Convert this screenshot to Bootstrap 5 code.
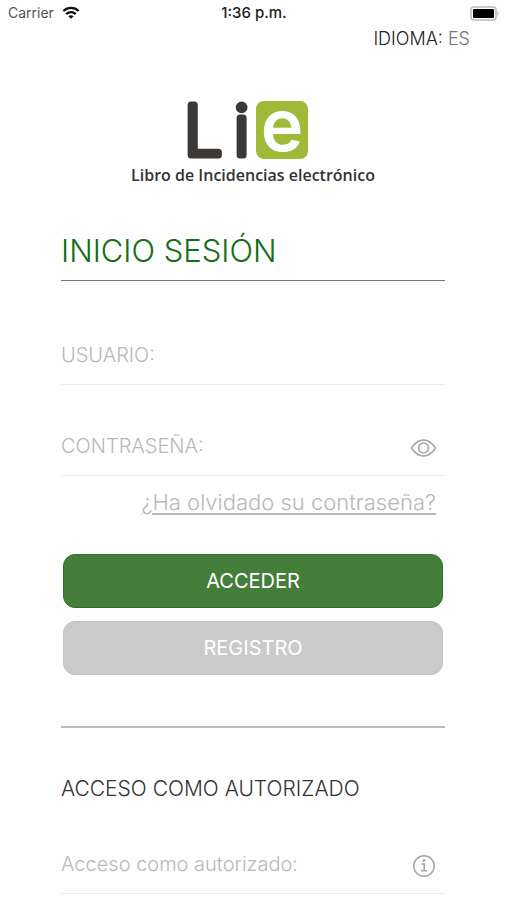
<!DOCTYPE html>
<html lang="es">
<head>
<meta charset="utf-8">
<meta name="viewport" content="width=device-width, initial-scale=1">
<title>Libro de Incidencias electrónico</title>
<link href="https://cdn.jsdelivr.net/npm/bootstrap@5.3.0/dist/css/bootstrap.min.css" rel="stylesheet">
<style>
body{font-family:Inter,"Open Sans",sans-serif;background:#fefefe;color:#333}
.status-bar{font:14px/26px Inter,sans-serif;color:#555;padding:0 6px 0 8px}
.status-time{font-size:15px;color:#222;font-weight:500}
.lang-row{font-size:18px;line-height:26px;font-weight:300;padding-right:36px}
.lang-row a{color:#777}
.lang-row span{color:#222}
.brand-block{padding-top:48px}
.brand-logo{overflow:visible}
.tagline{font:600 16px/22px "Open Sans",sans-serif;color:#333;margin-top:4px}
.screen{padding:0 61px}
.title{font-size:31px;line-height:40px;font-weight:300;color:#127012;margin:45px 0 0;padding-bottom:9px;border-bottom:1px solid #777}
.field{height:60px;border-bottom:1px solid #ebebeb;padding-right:8px}
.field .form-control{font-size:20px;line-height:30px;font-weight:300;color:#777}
.field .form-control::placeholder{color:#b8b8b8;opacity:1}
.field-user{margin-top:44px}
.field-pass{margin-top:31px}
.icon-btn{line-height:0;margin-top:5px}
.forgot{font-size:22px;line-height:30px;padding:11px 9px 0 0}
.forgot a{color:#b8b8b8;font-weight:300;text-underline-offset:3px}
.actions{gap:13px;margin:37px 2px 0}
.actions .btn{font-size:20px;line-height:30px;padding:11px;border-radius:12px;border-width:1px;color:#fff}
.btn-enter{background:#457d3b;border-color:#26751f}
.btn-register{background:#cacaca;border-color:#c2c2c2}
.divider{margin:51px 0 0;border-top:2px solid #bbb;opacity:1}
.subtitle{font-size:21px;line-height:28px;font-weight:300;color:#333;margin:47px 0 0}
.field-auth{margin-top:31px}
</style>
</head>
<body>
<header>
  <div class="status-bar row g-0 align-items-center">
    <div class="col d-flex align-items-center gap-2">
      <span>Carrier</span>
      <svg width="18" height="14" viewBox="0 0 20 15" fill="none" stroke="#111" stroke-width="2.5" aria-hidden="true"><path d="M1.5 5.2C6.3.5 13.7.5 18.5 5.2M4.7 8.7C7.7 5.8 12.3 5.8 15.3 8.7"/><path d="M7 11.1C8.7 9.5 11.3 9.5 13 11.1L10 14Z" fill="#111" stroke="none"/></svg>
    </div>
    <div class="col-auto status-time">1:36 p.m.</div>
    <div class="col d-flex justify-content-end">
      <svg width="30" height="15" viewBox="0 0 30 15" aria-hidden="true"><rect x="1" y="1" width="25" height="13" rx="3" fill="#fff" stroke="#bbb" stroke-width="1.5"/><rect x="3" y="3" width="21" height="9" rx="1" fill="#000"/><path d="M27.5 5v5q2-2.5 0-5" fill="#aaa"/></svg>
    </div>
  </div>
  <div class="lang-row text-end"><span>IDIOMA:</span> <a href="#" class="text-decoration-none">ES</a></div>
</header>
<main class="screen">
  <div class="brand-block text-center">
    <svg class="brand-logo d-block mx-auto" width="136" height="60" viewBox="0 0 136 60" role="img" aria-label="Lie" font-family="Inter, sans-serif">
      <g fill="#3c3835" stroke="#3c3835" stroke-width="7" stroke-linejoin="round" font-weight="200" font-size="68">
        <text x="-1" y="55">L</text><text x="49" y="55">i</text>
      </g>
      <rect x="71" y="1" width="52" height="58" rx="8" fill="#a0b938"/>
      <text x="97" y="51" text-anchor="middle" font-size="72" font-weight="600" fill="#fff">e</text>
    </svg>
    <div class="tagline">Libro de Incidencias electrónico</div>
  </div>
  <h1 class="title">INICIO SESIÓN</h1>
  <form>
    <div class="field field-user d-flex align-items-center">
      <input class="form-control border-0 bg-transparent p-0 shadow-none" type="text" placeholder="USUARIO:" aria-label="Usuario">
    </div>
    <div class="field field-pass d-flex align-items-center">
      <input class="form-control border-0 bg-transparent p-0 shadow-none" type="password" placeholder="CONTRASEÑA:" aria-label="Contraseña">
      <button type="button" class="btn icon-btn p-0 border-0" aria-label="Mostrar contraseña">
        <svg width="27" height="20" viewBox="0 0 27 20" fill="none" stroke="#a5a5a5" stroke-width="1.6"><path d="M1.5 10C3.5 7 7.5 2 13.5 2S23.5 7 25.5 10C23.5 13 19.5 18 13.5 18S3.5 13 1.5 10Z"/><circle cx="13.5" cy="10" r="5"/></svg>
      </button>
    </div>
    <div class="forgot text-end"><a href="#">¿Ha olvidado su contraseña?</a></div>
    <div class="actions d-grid">
      <button type="submit" class="btn btn-enter">ACCEDER</button>
      <button type="button" class="btn btn-register">REGISTRO</button>
    </div>
    <hr class="divider">
    <h2 class="subtitle">ACCESO COMO AUTORIZADO</h2>
    <div class="field field-auth d-flex align-items-center">
      <input class="form-control border-0 bg-transparent p-0 shadow-none" type="text" placeholder="Acceso como autorizado:" aria-label="Acceso como autorizado">
      <button type="button" class="btn icon-btn p-0 border-0" aria-label="Información">
        <svg width="26" height="24" viewBox="0 0 26 24" fill="none" stroke="#a5a5a5" stroke-width="1.5"><circle cx="13" cy="12" r="10.2"/><path d="M10.5 10h2.7v6M10 16.7h6"/><circle cx="13" cy="6.5" r="1" fill="#a5a5a5" stroke-width="1"/></svg>
      </button>
    </div>
  </form>
</main>
<script src="https://cdn.jsdelivr.net/npm/bootstrap@5.3.0/dist/js/bootstrap.bundle.min.js"></script>
</body>
</html>
